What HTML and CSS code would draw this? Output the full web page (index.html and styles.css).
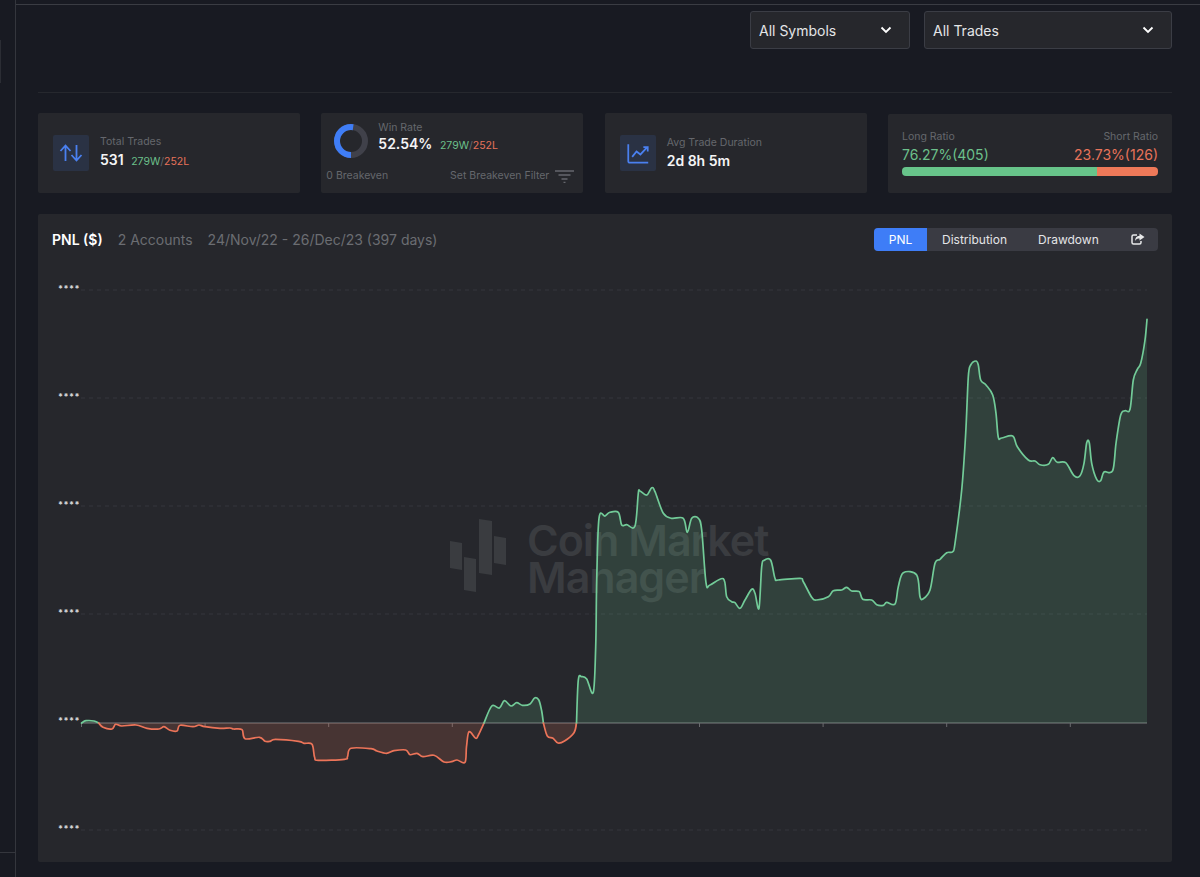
FILE: index.html
```html
<!DOCTYPE html>
<html lang="en">
<head>
  <meta charset="UTF-8">
  <title>PNL Dashboard</title>
  <link rel="stylesheet" href="styles.css">
</head>
<body>
  <aside class="side-rail">
    <div class="rail-btn"></div>
    <div class="rail-foot"></div>
  </aside>

  <main class="main">
    <div class="top-line"></div>

    <div class="filters">
      <div class="select select-symbols">
        <span>All Symbols</span>
        <svg class="chevron" viewBox="0 0 12 8"><path d="M1.5 1.5 6 6l4.500-4.500"/></svg>
      </div>
      <div class="select select-trades">
        <span>All Trades</span>
        <svg class="chevron" viewBox="0 0 12 8"><path d="M1.500 1.500 6 6l4.500-4.500"/></svg>
      </div>
    </div>

    <div class="stats">
      <div class="card stat-card">
        <div class="icon-box">
          <svg viewBox="0 0 36 36" class="icon-svg">
            <path d="M12.500 26V11M7.500 16l5-5.500 5 5.500M23.500 10v15M18.500 20l5 5.500 5-5.500"/>
          </svg>
        </div>
        <div>
          <div class="stat-label">Total Trades</div>
          <div class="stat-value">531 <span class="wl"><span class="green">279W</span><span class="slash">/</span><span class="red">252L</span></span></div>
        </div>
      </div>

      <div class="card win-card">
        <div class="win-top">
          <svg class="donut" viewBox="0 0 34 34">
            <circle class="donut-rest" cx="17" cy="17" r="14"/>
            <circle class="donut-arc" cx="17" cy="17" r="14" pathLength="100" stroke-dasharray="52.54 100" transform="rotate(90 17 17) translate(0 0)"/>
          </svg>
          <div>
            <div class="stat-label">Win Rate</div>
            <div class="stat-value win-value">52.54% <span class="wl"><span class="green">279W</span><span class="slash">/</span><span class="red">252L</span></span></div>
          </div>
        </div>
        <div class="win-bottom">
          <span class="stat-label">0 Breakeven</span>
          <span class="be-filter">
            <span class="stat-label">Set Breakeven Filter</span>
            <svg class="filter-icon" viewBox="0 0 19 13"><path d="M0 1h19M3.500 5h12M6.500 9h6M8.500 12.500h2"/></svg>
          </span>
        </div>
      </div>

      <div class="card stat-card">
        <div class="icon-box">
          <svg viewBox="0 0 37 36" class="icon-svg">
            <path d="M8.500 9v17.500a1.500 1.500 0 0 0 1.500 1.500h19"/>
            <path d="M12.500 22l4.500-5.500 4 3 7-7.500M24 12h4.500v4.500"/>
          </svg>
        </div>
        <div>
          <div class="stat-label">Avg Trade Duration</div>
          <div class="stat-value">2d 8h 5m</div>
        </div>
      </div>

      <div class="card ratio-card">
        <div class="ratio-row">
          <span class="stat-label">Long Ratio</span>
          <span class="stat-label">Short Ratio</span>
        </div>
        <div class="ratio-row ratio-values">
          <span class="green">76.27%(405)</span>
          <span class="red">23.73%(126)</span>
        </div>
        <div class="ratio-bar">
          <div class="ratio-long" style="width: 76.27%"></div>
          <div class="ratio-short"></div>
        </div>
      </div>
    </div>

    <section class="card chart-card">
      <header class="chart-head">
        <h2>PNL ($)</h2>
        <span class="muted accounts">2 Accounts</span>
        <span class="muted">24/Nov/22 - 26/Dec/23 (397 days)</span>
        <div class="tabs">
          <span class="tab active">PNL</span>
          <span class="tab tab-dist">Distribution</span>
          <span class="tab tab-draw">Drawdown</span>
          <span class="tab tab-share">
            <svg viewBox="0 0 14 12" class="share-icon">
              <path class="share-box" d="M6 2H2.500A1.500 1.500 0 0 0 1 3.500v6A1.500 1.500 0 0 0 2.500 11h6A1.500 1.500 0 0 0 10 9.500V8"/>
              <path class="share-arrow" d="M8.500 0.500 13.500 4 8.500 7.500V5.500C6.500 5.500 5 6 4 8c0-3 1.500-5 4.500-5.200z"/>
            </svg>
          </span>
        </div>
      </header>

      <svg id="pnlChart" class="chart" viewBox="38 264 1134 598" width="1134" height="598">
        <g id="grid"></g>
        <g class="watermark">
          <path d="M450 541l12 2v27l-12-2zM464 557l12 2v33l-12-2zM479 519l13 2v54l-13-2zM494 536l12 2v27l-12-2z"/>
          <text x="527" y="556">Coin Market</text>
          <text x="527" y="593">Manager</text>
        </g>
        <g id="series"></g>
      </svg>
    </section>
  </main>

  <script src="script.js"></script>
</body>
</html>
```

FILE: styles.css
```css
* {
  box-sizing: border-box;
}
body {
  margin: 0;
  height: 877px;
  overflow: hidden;
  display: flex;
  background: #181a22;
  color: #fff;
  font-family: "Inter", "Noto Sans", sans-serif;
}

.side-rail {
  width: 16px;
  flex: none;
  border-right: 1px solid #34363d;
  position: relative;
}
.rail-btn {
  margin-top: 40px;
  width: 1px;
  height: 43px;
  background: #2b2d34;
}
.rail-foot {
  margin-top: 769px;
  height: 1px;
  background: #34363d;
}

.main {
  flex: 1;
  padding-right: 28px;
}
.top-line {
  height: 5px;
  margin-right: -28px;
  border-bottom: 1px solid #3a3c43;
}

.filters {
  margin-left: 22px;
  height: 87.5px;
  padding-top: 6px;
  display: flex;
  justify-content: flex-end;
  gap: 14px;
  border-bottom: 1px solid #26282e;
  align-items: flex-start;
}
.select {
  height: 38px;
  padding: 0 17px 0 8px;
  display: flex;
  align-items: center;
  justify-content: space-between;
  background: #26272c;
  border: 1px solid #3b3d45;
  border-radius: 3px;
  font-size: 14px;
  color: #e4e5e7;
}
.select-symbols {
  width: 160px;
}
.select-trades {
  width: 248px;
}
.chevron {
  width: 12px;
  height: 8px;
  fill: none;
  stroke: #fff;
  stroke-width: 1.800;
}

.stats {
  margin: 20.500px 0 21px 22px;
  display: grid;
  grid-template-columns: 262px 262px 262px 1fr;
  column-gap: 21.330px;
}
.card {
  background: #26272c;
  border-radius: 2px;
}
.stat-card {
  height: 80px;
  padding-left: 15px;
  display: flex;
  align-items: center;
  gap: 11px;
}
.icon-box {
  width: 36px;
  height: 36px;
  background: #2a3244;
  border-radius: 2px;
}
.icon-svg {
  display: block;
  width: 36px;
  height: 36px;
  fill: none;
  stroke: #4a80f0;
  stroke-width: 1.800;
}
.stat-label {
  font-size: 10.500px;
  color: #65676d;
  line-height: 14px;
}
.stat-value {
  margin-top: 2px;
  font-size: 14px;
  font-weight: 600;
  line-height: 18px;
  color: #f4f4f5;
}
.wl {
  margin-left: 4px;
  font-size: 10.500px;
  font-weight: 400;
}
.green {
  color: #6cc08b;
}
.red {
  color: #e8735a;
}
.slash {
  color: #65676d;
}

.win-card {
  height: 80px;
  padding: 8px 9px 0 5px;
}
.win-top {
  display: flex;
  gap: 10px;
  padding-left: 8px;
  height: 38px;
}
.donut {
  width: 34px;
  height: 34px;
  margin-top: 3px;
  fill: none;
  stroke-width: 6;
}
.donut-rest {
  stroke: #40414a;
}
.donut-arc {
  stroke: #3f7df6;
}
.win-value {
  margin-top: 0;
}
.win-bottom {
  margin-top: 10px;
  display: flex;
  justify-content: space-between;
  align-items: center;
}
.be-filter {
  display: flex;
  align-items: center;
  gap: 6px;
}
.filter-icon {
  width: 19px;
  height: 13px;
  fill: none;
  stroke: #65676d;
  stroke-width: 1.400;
}

.ratio-card {
  height: 79px;
  margin-top: 1px;
  padding: 16px 14px 0;
}
.ratio-row {
  display: flex;
  justify-content: space-between;
}
.ratio-values {
  font-size: 14px;
  line-height: 19px;
  margin-top: 1px;
}
.ratio-bar {
  margin-top: 3px;
  height: 9px;
  display: flex;
  border-radius: 4px;
  overflow: hidden;
}
.ratio-long {
  background: #67c48a;
}
.ratio-short {
  flex: 1;
  background: #ee7959;
}

.chart-card {
  margin-left: 22px;
  height: 648px;
}
.chart-head {
  height: 50px;
  padding: 0 14px;
  display: flex;
  align-items: center;
  font-size: 14px;
}
.chart-head h2 {
  margin: 0 15px 0 0;
  font-size: 14px;
  font-weight: 600;
}
.muted {
  color: #6b6d72;
}
.accounts {
  margin-right: 15px;
}
.tabs {
  margin-left: auto;
  width: 284px;
  height: 23px;
  display: flex;
  align-items: center;
  background: #3a3b43;
  border-radius: 4px;
  font-size: 12px;
  color: #e4e5e7;
  overflow: hidden;
}
.tab {
  line-height: 23px;
}
.tab.active {
  width: 53px;
  text-align: center;
  background: #3e7df7;
  color: #fff;
}
.tab-dist {
  margin-left: 15px;
}
.tab-draw {
  margin-left: 31px;
}
.tab-share {
  margin-left: 32px;
  display: flex;
}
.share-icon {
  width: 14px;
  height: 12px;
}
.share-box {
  fill: none;
  stroke: #e8e9ea;
  stroke-width: 1.500;
}
.share-arrow {
  fill: #e8e9ea;
}

.chart {
  display: block;
}
.watermark {
  fill: #3a3c40;
  font-size: 43px;
  font-weight: 600;
  letter-spacing: -1px;
}
.grid-line {
  stroke: #35363c;
  stroke-width: 1;
  stroke-dasharray: 4 4;
}
.zero-line {
  stroke: #7b7c7e;
  stroke-width: 1;
}
.axis-tick {
  stroke: #6a6b6e;
  stroke-width: 1;
}
.axis-label {
  fill: #d8d9da;
  font-size: 9px;
  font-weight: 700;
  letter-spacing: 0.500px;
}
.area-up {
  fill: rgba(111, 207, 151, 0.16);
}
.area-down {
  fill: rgba(238, 117, 89, 0.17);
}
.line-up, .line-down {
  fill: none;
  stroke-width: 1.700;
  stroke-linejoin: round;
  stroke-linecap: round;
}
.line-up {
  stroke: #72cb98;
}
.line-down {
  stroke: #ec7459;
}
```

FILE: script.js
```js
const ZERO = 723;
const SVG_NS = 'http://www.w3.org/2000/svg';

// equity curve, split where it crosses zero
const segments = [
  { up: true, pts: [[81.5,723],[86,720.7],[94,721],[98.7,723]] },
  { up: false, pts: [[98.7,723],[103,727.3],[112,729],[115.6,724.3],[121.7,726],[136,725],[147,728.3],[159,729],[164,726.7],[170,730.3],[177,731],[180,725.3],[193,726.7],[199,725],[205,726.7],[220,728.3],[230,728],[233.5,729],[242,729.7],[245,738.7],[259.5,737.3],[265,741.3],[270,741.3],[275.5,739.3],[298.5,741.3],[304,743.3],[312,744.3],[314.6,757.3],[318.4,760.3],[344.4,759.3],[347.5,756.7],[351,748.3],[371,748.7],[377,751],[386.5,753.3],[394,750.7],[405.7,750],[410,754.7],[417,753.3],[423,756.7],[434,755.3],[444,762],[451.6,761.7],[457,760],[465,762.3],[466.5,746.7],[469,731.7],[475.7,738.3],[478.4,735],[484,723]] },
  { up: true, pts: [[484,723],[491.8,706],[499.4,708],[504.4,700.7],[511,706],[516.7,702.7],[522.4,705.3],[530,704],[534.6,698],[538.8,700],[541.5,710],[543.4,723]] },
  { up: false, pts: [[543.4,723],[547.3,736],[553,738.3],[558,743],[564.5,741],[574,732.7],[576.5,723]] },
  { up: true, pts: [[576.5,723],[578.3,680],[581.7,676.7],[586.7,679],[593.3,692.3],[595.7,646.7],[596.7,580],[599,518.3],[605,516],[610,512.3],[618.3,512.3],[621.7,525],[626.7,524.7],[635,526],[638.3,493.3],[640,491],[646.7,495],[651.7,487.7],[655,491.7],[663.3,513.3],[671.7,518.3],[683.3,518.3],[687.3,532.3],[691.7,518.3],[698.3,518.3],[701.7,530],[706,582.7],[710,585],[723.3,578.7],[726.7,596.7],[731.7,601.7],[735,602.7],[740,608.3],[745,600],[751.7,589.3],[755,593.3],[759,608.3],[761.7,566.7],[764.3,560.3],[770.7,560.3],[775,578.3],[778.3,580],[800,578.3],[803.3,581.7],[811.7,597.3],[816.7,600],[828.3,596.7],[833.3,590.7],[841.7,590],[846.7,587.3],[851.7,591],[859.3,591.7],[862.7,599.3],[871.7,600],[876.7,604.7],[883.3,605.3],[886.7,602.3],[895,604],[898.3,586.7],[903.3,572.7],[916.7,575],[920,596.7],[923.3,598.7],[930,590],[935,563.3],[940,559.3],[946.7,552.7],[952.7,551.7],[955,543.3],[961.7,490],[965.7,433.3],[968.3,376.7],[970.7,365],[976,361],[978.3,365],[980.7,380],[986,385],[992.7,395],[996,413.3],[998.3,437.3],[1001.7,438],[1012.7,436],[1017.3,446.7],[1028.3,460],[1035,461],[1040,464.7],[1048.3,464.3],[1052.7,457.7],[1057.3,462.3],[1065.7,462.7],[1074,475.7],[1080,475.7],[1084,463.3],[1086.7,442.7],[1089.3,442.7],[1091.7,463.3],[1096.7,479.3],[1100.7,480.7],[1104,472],[1112.7,470.7],[1116,443.3],[1120.7,415],[1125,410.7],[1130,409.3],[1133.3,380],[1137.3,369.3],[1140.7,363.3],[1145,340],[1147,319.3]] }
];

function el(name, attrs, parent) {
  const node = document.createElementNS(SVG_NS, name);
  Object.keys(attrs).forEach(k => node.setAttribute(k, attrs[k]));
  parent.appendChild(node);
  return node;
}

function smoothPath(pts) {
  let d = `M${pts[0][0]} ${pts[0][1]}`;
  for (let i = 0; i < pts.length - 1; i++) {
    const p0 = pts[i - 1] || pts[i];
    const p1 = pts[i];
    const p2 = pts[i + 1];
    const p3 = pts[i + 2] || p2;
    const c1x = p1[0] + (p2[0] - p0[0]) / 6;
    const c1y = p1[1] + (p2[1] - p0[1]) / 6;
    const c2x = p2[0] - (p3[0] - p1[0]) / 6;
    const c2y = p2[1] - (p3[1] - p1[1]) / 6;
    d += `C${c1x.toFixed(1)} ${c1y.toFixed(1)} ${c2x.toFixed(1)} ${c2y.toFixed(1)} ${p2[0]} ${p2[1]}`;
  }
  return d;
}

function drawGrid() {
  const grid = document.getElementById('grid');
  [290, 398, 506, 614, 830].forEach(y => {
    el('line', { class: 'grid-line', x1: 81, x2: 1147, y1: y, y2: y }, grid);
  });
  [290, 398, 506, 614, 722, 830].forEach(y => {
    const label = el('text', { class: 'axis-label', x: 58, y: y + 2 }, grid);
    label.textContent = '****';
  });
  el('line', { class: 'zero-line', x1: 81, x2: 1147, y1: ZERO, y2: ZERO }, grid);
  for (let i = 0; i < 9; i++) {
    const x = 81.5 + i * 123.6;
    el('line', { class: 'axis-tick', x1: x, x2: x, y1: ZERO, y2: ZERO + 4 }, grid);
  }
}

function drawSeries() {
  const series = document.getElementById('series');
  segments.forEach(seg => {
    const d = smoothPath(seg.pts);
    const first = seg.pts[0][0];
    const last = seg.pts[seg.pts.length - 1][0];
    el('path', { class: seg.up ? 'area-up' : 'area-down', d: `${d}L${last} ${ZERO}L${first} ${ZERO}Z` }, series);
  });
  segments.forEach(seg => {
    el('path', { class: seg.up ? 'line-up' : 'line-down', d: smoothPath(seg.pts) }, series);
  });
}

drawGrid();
drawSeries();
```
